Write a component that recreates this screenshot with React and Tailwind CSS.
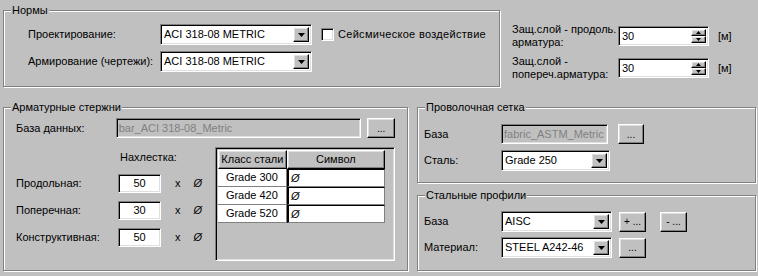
// App.jsx
// ─── Диалог параметров армирования (классический стиль Windows) ─────────────

const sunken = 'border border-t-[#808080] border-l-[#808080] border-b-white border-r-white shadow-[inset_1px_1px_0_#000,inset_-1px_-1px_0_#dfdfdf]'
const raised = 'border border-t-white border-l-white border-b-black border-r-black shadow-[inset_-1px_-1px_0_#808080,inset_1px_1px_0_#dfdfdf]'

// ── Рамка группы с заголовком ───────────────────────────────────────────────
function Group({ title, className = '', children }) {
  return (
    <div className={`border border-[#808080] shadow-[inset_1px_1px_0_#fff,1px_1px_0_#fff] flex flex-col ${className}`}>
      <span className="self-start -mt-[7px] ml-[7px] px-[1px] bg-[#c0c0c0] leading-[13px]">{title}</span>
      {children}
    </div>
  )
}

const ArrowDown = ({ w = 7, h = 4 }) => (
  <svg width={w} height={h} viewBox={`0 0 ${w} ${h}`}><polygon points={`0,0 ${w},0 ${w / 2},${h}`} fill="#000" /></svg>
)
const ArrowUp = ({ w = 7, h = 4 }) => (
  <svg width={w} height={h} viewBox={`0 0 ${w} ${h}`}><polygon points={`0,${h} ${w},${h} ${w / 2},0`} fill="#000" /></svg>
)

function Combo({ value, className = '' }) {
  return (
    <div className={`${sunken} bg-white h-[21px] flex items-center p-[2px] ${className}`}>
      <span className="flex-1 pl-[1px] whitespace-nowrap overflow-hidden">{value}</span>
      <div className={`${raised} bg-[#c0c0c0] w-[16px] h-full flex items-center justify-center`}>
        <ArrowDown />
      </div>
    </div>
  )
}

function Button({ label, className = '' }) {
  return (
    <div className={`${raised} bg-[#c0c0c0] h-[20px] flex items-center justify-center text-[10px] ${className}`}>{label}</div>
  )
}

function Spinner({ value }) {
  return (
    <div className={`${sunken} bg-white h-[20px] w-[91px] flex items-center p-[2px]`}>
      <span className="flex-1 pl-[1px]">{value}</span>
      <div className="w-[15px] h-full flex flex-col">
        <div className={`${raised} bg-[#c0c0c0] flex-1 flex items-center justify-center`}><ArrowUp w={5} h={3} /></div>
        <div className={`${raised} bg-[#c0c0c0] flex-1 flex items-center justify-center`}><ArrowDown w={5} h={3} /></div>
      </div>
    </div>
  )
}

function LapRow({ label, value }) {
  return (
    <div className="flex items-center h-[19px]">
      <span className="w-[102px]">{label}</span>
      <div className={`${sunken} bg-white w-[43px] h-[19px] flex items-center justify-center`}>{value}</div>
      <span className="ml-[14px]">x</span>
      <span className="ml-[13px] italic">Ø</span>
    </div>
  )
}

const grades = ['Grade 300', 'Grade 420', 'Grade 520']

export default function App() {
  return (
    <div className="w-[758px] h-[276px] overflow-hidden bg-[#c0c0c0] text-black text-[11px] leading-[13px] font-['Liberation_Sans',Arial,sans-serif] pl-[3px] pt-[10px]">
      {/* ── Верхняя строка ── */}
      <div className="flex">
        <Group title="Нормы" className="w-[497px] h-[77px]">
          <div className="pl-[24px] mt-[7px] flex flex-col gap-[6px]">
            <div className="flex items-center">
              <span className="w-[132px]">Проектирование:</span>
              <Combo value="ACI 318-08 METRIC" className="w-[152px]" />
              <div className={`${sunken} bg-white w-[13px] h-[13px] ml-[9px]`} />
              <span className="ml-[4px] tracking-[0.3px]">Сейсмическое воздействие</span>
            </div>
            <div className="flex items-center">
              <span className="w-[132px]">Армирование (чертежи):</span>
              <Combo value="ACI 318-08 METRIC" className="w-[152px]" />
            </div>
          </div>
        </Group>

        <div className="ml-[12px] mt-[13px] flex flex-col gap-[6px]">
          <div className="flex items-center h-[26px]">
            <span className="w-[106px]">Защ.слой - продоль.<br />арматура:</span>
            <Spinner value="30" />
            <span className="ml-[9px]">[м]</span>
          </div>
          <div className="flex items-center h-[26px]">
            <span className="w-[106px]">Защ.слой -<br />попереч.арматура:</span>
            <Spinner value="30" />
            <span className="ml-[9px]">[м]</span>
          </div>
        </div>
      </div>

      {/* ── Нижняя строка ── */}
      <div className="flex mt-[20px]">
        <Group title="Арматурные стержни" className="w-[405px] h-[164px]">
          <div className="px-[12px]">
            <div className="flex items-center mt-[4px]">
              <span className="w-[101px]">База данных:</span>
              <div className={`${sunken} bg-[#c0c0c0] text-[#808080] w-[249px] h-[20px] flex items-center pl-[2px]`}>bar_ACI 318-08_Metric</div>
              <Button label="..." className="w-[28px] ml-[6px]" />
            </div>

            <div className="flex mt-[9px]">
              <div className="w-[201px] flex flex-col">
                <span className="ml-[104px] mt-[4px]">Нахлестка:</span>
                <div className="flex flex-col gap-[8px] mt-[10px]">
                  <LapRow label="Продольная:" value="50" />
                  <LapRow label="Поперечная:" value="30" />
                  <LapRow label="Конструктивная:" value="50" />
                </div>
              </div>

              <div className={`${sunken} w-[182px] h-[114px] p-[2px] bg-[#c0c0c0]`}>
                <div className="flex">
                  <div className={`${raised} w-[69px] h-[19px] flex items-center justify-center`}>Класс стали</div>
                  <div className={`${raised} w-[98px] h-[19px] flex items-center justify-center`}>Символ</div>
                </div>
                {grades.map((g) => (
                  <div key={g} className="flex">
                    <div className="w-[69px] h-[18px] bg-white border-r border-b border-[#808080] flex items-center justify-center">{g}</div>
                    <div className="w-[98px] h-[18px] bg-white border-l-2 border-t border-l-black border-t-black border-b border-b-[#808080] border-r border-r-[#808080] flex items-center pl-[2px] italic">Ø</div>
                  </div>
                ))}
              </div>
            </div>
          </div>
        </Group>

        <div className="ml-[9px] flex flex-col gap-[12px]">
          <Group title="Проволочная сетка" className="w-[339px] h-[76px]">
            <div className="pl-[6px]">
              <div className="flex items-center mt-[10px]">
                <span className="w-[77px]">База</span>
                <div className={`${sunken} bg-[#c0c0c0] text-[#808080] w-[107px] h-[20px] flex items-center pl-[2px] whitespace-nowrap overflow-hidden`}>fabric_ASTM_Metric</div>
                <Button label="..." className="w-[26px] ml-[10px]" />
              </div>
              <div className="flex items-center mt-[6px]">
                <span className="w-[77px]">Сталь:</span>
                <Combo value="Grade 250" className="w-[109px]" />
              </div>
            </div>
          </Group>

          <Group title="Стальные профили" className="w-[339px] h-[76px]">
            <div className="pl-[6px]">
              <div className="flex items-center mt-[9px]">
                <span className="w-[77px]">База</span>
                <Combo value="AISC" className="w-[111px]" />
                <Button label="+ ..." className="w-[27px] ml-[7px]" />
                <Button label="- ..." className="w-[27px] ml-[14px]" />
              </div>
              <div className="flex items-center mt-[5px]">
                <span className="w-[77px]">Материал:</span>
                <Combo value="STEEL A242-46" className="w-[111px]" />
                <Button label="..." className="w-[27px] ml-[7px]" />
              </div>
            </div>
          </Group>
        </div>
      </div>
    </div>
  )
}
